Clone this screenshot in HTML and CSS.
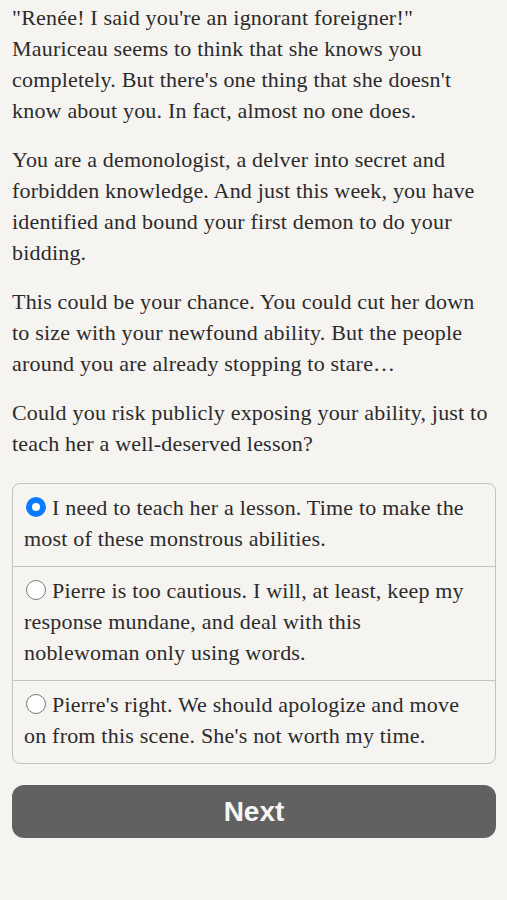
FILE: index.html
```html
<!DOCTYPE html>
<html>
<head>
<meta charset="utf-8">
<link rel="stylesheet" href="styles.css">
</head>
<body>
<main class="page">
  <p class="para">"Renée! I said you're an ignorant foreigner!" Mauriceau seems to think that she knows you completely. But there's one thing that she doesn't know about you. In fact, almost no one does.</p>
  <p class="para">You are a demonologist, a delver into secret and forbidden knowledge. And just this week, you have identified and bound your first demon to do your bidding.</p>
  <p class="para">This could be your chance. You could cut her down to size with your newfound ability. But the people around you are already stopping to stare…</p>
  <p class="para">Could you risk publicly exposing your ability, just to teach her a well-deserved lesson?</p>
  <div class="choices">
    <label class="choice"><span class="radio selected"></span>I need to teach her a lesson. Time to make the most of these monstrous abilities.</label>
    <label class="choice"><span class="radio"></span>Pierre is too cautious. I will, at least, keep my response mundane, and deal with this noblewoman only using words.</label>
    <label class="choice"><span class="radio"></span>Pierre's right. We should apologize and move on from this scene. She's not worth my time.</label>
  </div>
  <button class="next">Next</button>
</main>
</body>
</html>
```
FILE: styles.css
```css
html, body {
  margin: 0;
  padding: 0;
  background: #f6f4f1;
}
.page {
  padding: 2px 11px 0 12px;
  font-family: "Liberation Serif", serif;
  font-size: 22px;
  letter-spacing: 0.2px;
  line-height: 31px;
  color: #2b2b2b;
}
.para {
  margin: 0 4px 18px 0;
}
.choices {
  margin-top: 24px;
  border: 1px solid #c4c2bf;
  border-radius: 8px;
  overflow: hidden;
}
.choice {
  display: block;
  padding: 8px 22px 12px 11px;
  border-top: 1px solid #c4c2bf;
}
.choice:first-child {
  border-top: none;
}
.radio {
  display: inline-block;
  box-sizing: border-box;
  width: 20px;
  height: 20px;
  border-radius: 50%;
  border: 1.5px solid #7a7a7a;
  background: #ffffff;
  margin: 0 6px 0 2px;
  vertical-align: -2px;
}
.radio.selected {
  border: 6.5px solid #0a7aff;
  background: #ffffff;
}
.next {
  display: block;
  width: 100%;
  height: 53px;
  margin-top: 21px;
  border: none;
  border-radius: 12px;
  background: #616161;
  color: #f7f7f7;
  font-family: "Liberation Sans", Arial, sans-serif;
  font-weight: bold;
  font-size: 28px;
  letter-spacing: 0;
  padding: 0;
}
```
